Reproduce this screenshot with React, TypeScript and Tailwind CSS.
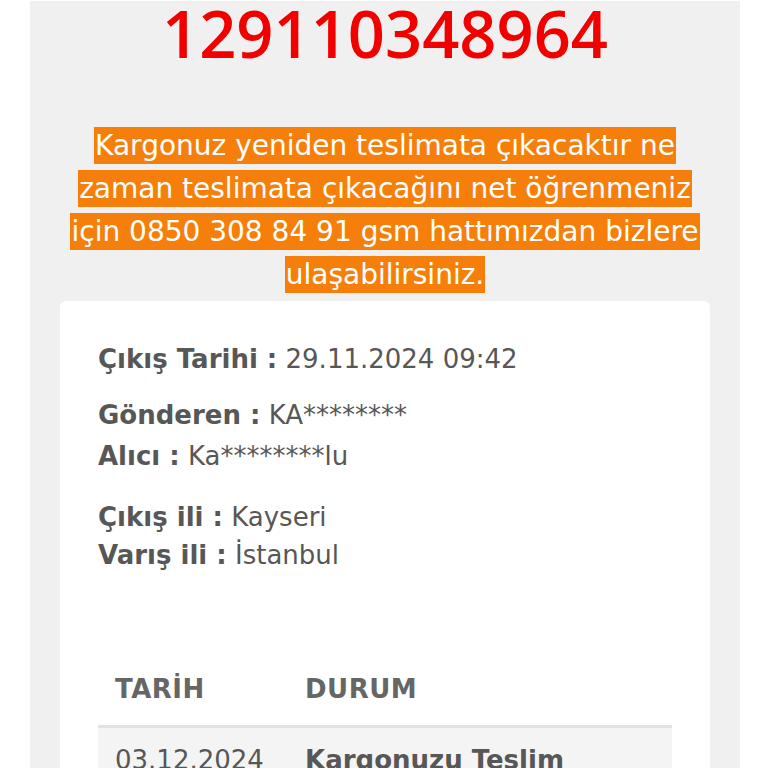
export default function App() {
  return (
    <div className="min-h-screen bg-white" style={{ fontFamily: "'DejaVu Sans', 'Open Sans', sans-serif" }}>
      <div className="ml-[30px] w-[710px] bg-[#f0f0f0] px-[30px] pb-10">
        {/* Takip numarası */}
        <h1
          className="text-center text-[65px] leading-none font-semibold text-[#f20000] mt-[1px]"
          style={{ fontFamily: "'Open Sans', sans-serif" }}
        >
          129110348964
        </h1>

        {/* Uyarı */}
        <p className="mt-[58px] text-center text-[28px] leading-[43px]">
          <span className="bg-[#f57f0a] text-white px-[1px] py-[2px] box-decoration-clone">
            Kargonuz yeniden teslimata çıkacaktır ne
            <br />
            zaman teslimata çıkacağını net öğrenmeniz
            <br />
            için 0850 308 84 91 gsm hattımızdan bizlere
            <br />
            ulaşabilirsiniz.
          </span>
        </p>

        {/* Gönderi bilgileri */}
        <div className="mt-[5px] bg-white rounded-md px-[38px] pt-[38px] text-[#575757]">
          <div className="text-[26px] leading-[40px]">
            <p>
              <span className="font-bold">Çıkış Tarihi :</span> 29.11.2024 09:42
            </p>
          </div>
          <div className="mt-[16px] text-[26px] leading-[41px]">
            <p>
              <span className="font-bold">Gönderen :</span> KA********
            </p>
            <p>
              <span className="font-bold">Alıcı :</span> Ka********lu
            </p>
          </div>
          <div className="mt-[21px] text-[26px] leading-[38px]">
            <p>
              <span className="font-bold">Çıkış ili :</span> Kayseri
            </p>
            <p>
              <span className="font-bold">Varış ili :</span> İstanbul
            </p>
          </div>

          <table className="mt-[95px] w-full text-left text-[26px] leading-[40px]">
            <thead>
              <tr className="border-b-[3px] border-[#e2e2e2]">
                <th className="pl-[17px] pb-[16px] w-[207px] font-bold tracking-[0.5px] text-[#666]">TARİH</th>
                <th className="pb-[16px] font-bold tracking-[0.5px] text-[#666]">DURUM</th>
              </tr>
            </thead>
            <tbody>
              <tr className="bg-[#f4f4f4]">
                <td className="pl-[17px] pt-[12px] pb-4 align-top">03.12.2024</td>
                <td className="pt-[12px] pb-4 font-bold align-top">Kargonuzu Teslim</td>
              </tr>
            </tbody>
          </table>
        </div>
      </div>
    </div>
  );
}
